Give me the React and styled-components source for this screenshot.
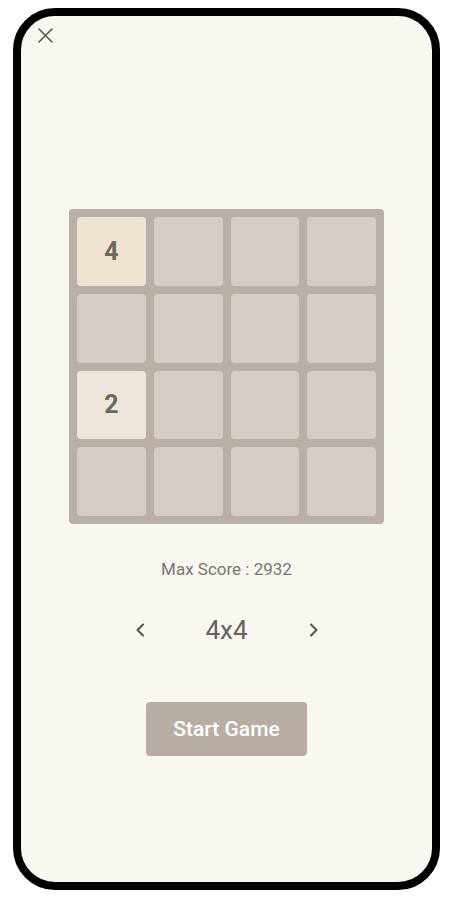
import React from "react";
import styled, { createGlobalStyle } from "styled-components";

const Global = createGlobalStyle`
  html, body { margin: 0; padding: 0; background: #ffffff; }
  body { font-family: Roboto, "Liberation Sans", Arial, sans-serif; }
  * { box-sizing: border-box; }
`;

const Frame = styled.div`
  margin: 8px 0 0 13px;
  width: 427px;
  height: 882px;
  border: 8px solid #000;
  border-radius: 42px;
  background: #f9f8f0;
  display: flex;
  flex-direction: column;
  align-items: center;
  overflow: hidden;
`;

const Header = styled.div`
  align-self: stretch;
  display: flex;
  padding: 11px 0 0 16px;
`;

const CloseButton = styled.button`
  width: 17px;
  height: 17px;
  padding: 0;
  border: none;
  background: transparent;
  display: flex;
  cursor: pointer;
`;

const Board = styled.div`
  margin-top: 165px;
  width: 315px;
  height: 315px;
  padding: 8px;
  background: #b9afa6;
  border-radius: 4px;
  display: grid;
  grid-template-columns: repeat(4, 1fr);
  grid-template-rows: repeat(4, 1fr);
  gap: 8px;
`;

const tileColors = {
  0: "#d4cdc6",
  2: "#eee6dc",
  4: "#ede3d0",
};

const Tile = styled.div`
  background: ${(p) => tileColors[p.$value] || "#d4cdc6"};
  border-radius: 4px;
  display: flex;
  align-items: center;
  justify-content: center;
  font-size: 25px;
  font-weight: 700;
  color: #6f665d;
`;

const Score = styled.div`
  margin-top: 35px;
  font-size: 17px;
  line-height: 20px;
  color: #7a7670;
`;

const Selector = styled.div`
  margin-top: 36px;
  display: flex;
  align-items: center;
  height: 30px;
`;

const Arrow = styled.button`
  width: 20px;
  height: 30px;
  padding: 0;
  border: none;
  background: transparent;
  display: flex;
  align-items: center;
  justify-content: center;
  cursor: pointer;
`;

const SizeLabel = styled.div`
  width: 154px;
  text-align: center;
  font-size: 26px;
  line-height: 30px;
  color: #66625d;
`;

const StartButton = styled.button`
  margin-top: 57px;
  width: 161px;
  height: 54px;
  border: none;
  border-radius: 4px;
  background: #b8aea4;
  color: #ffffff;
  font-family: Roboto, "Liberation Sans", Arial, sans-serif;
  font-size: 21px;
  font-weight: 500;
  cursor: pointer;
`;

const board = [
  [4, 0, 0, 0],
  [0, 0, 0, 0],
  [2, 0, 0, 0],
  [0, 0, 0, 0],
];

export default function App() {
  return (
    <>
      <Global />
      <Frame>
        <Header>
          <CloseButton aria-label="close">
            <svg width="17" height="17" viewBox="0 0 17 17">
              <path d="M2 2 L15 15 M15 2 L2 15" stroke="#5a5753" strokeWidth="1.6" strokeLinecap="round" fill="none" />
            </svg>
          </CloseButton>
        </Header>
        <Board>
          {board.flat().map((v, i) => (
            <Tile key={i} $value={v}>{v ? v : ""}</Tile>
          ))}
        </Board>
        <Score>Max Score : 2932</Score>
        <Selector>
          <Arrow aria-label="previous">
            <svg width="10" height="14" viewBox="0 0 10 14">
              <path d="M8 1.5 L2.5 7 L8 12.5" stroke="#55524e" strokeWidth="2" fill="none" strokeLinecap="round" strokeLinejoin="round" />
            </svg>
          </Arrow>
          <SizeLabel>4x4</SizeLabel>
          <Arrow aria-label="next">
            <svg width="10" height="14" viewBox="0 0 10 14">
              <path d="M2 1.5 L7.5 7 L2 12.5" stroke="#55524e" strokeWidth="2" fill="none" strokeLinecap="round" strokeLinejoin="round" />
            </svg>
          </Arrow>
        </Selector>
        <StartButton>Start Game</StartButton>
      </Frame>
    </>
  );
}
